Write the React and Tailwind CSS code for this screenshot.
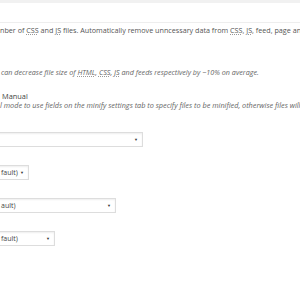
import React from 'react';

function Abbr({ children }) {
  return <abbr title={children} className="underline decoration-dotted decoration-[#999] underline-offset-1">{children}</abbr>;
}

function FakeSelect({ label, right, offset }) {
  // select box that starts off the left edge, like the clipped screenshot
  return (
    <div
      className={`flex items-center justify-between h-[15px] border border-[#ddd] bg-white shadow-[inset_0_1px_2px_rgba(0,0,0,0.07)] pl-[4px] pr-[4px] ${offset} ${right}`}
    >
      <span className="text-[7px] leading-none text-[#444] whitespace-nowrap">{label}</span>
      <span className="text-[4px] leading-none text-[#333]">▼</span>
    </div>
  );
}

export default function App() {
  return (
    <div className="w-[300px] h-[300px] overflow-hidden bg-white text-[#555] font-['Open_Sans',sans-serif]">
      <div className="h-[3px] bg-[#f1f1f1]" />
      <div className="h-[19px]" />
      <div className="border-t border-[#eee]" />

      <p className="mt-[2px] text-[7.2px] leading-[10px] whitespace-nowrap">
        nber of <Abbr>CSS</Abbr> and <Abbr>JS</Abbr> files. Automatically remove unncessary data from <Abbr>CSS</Abbr>, <Abbr>JS</Abbr>, feed, page and
      </p>

      <p className="mt-[32px] pl-[1px] text-[7.2px] leading-[10px] italic text-[#666] whitespace-nowrap">
        can decrease file size of <Abbr>HTML</Abbr>, <Abbr>CSS</Abbr>, <Abbr>JS</Abbr> and feeds respectively by ~10% on average.
      </p>

      <p className="mt-[15px] pl-[2px] text-[7.4px] leading-[9px] text-[#444]">Manual</p>
      <p className="text-[7.3px] leading-[9px] italic text-[#666] whitespace-nowrap">
        l mode to use fields on the minify settings tab to specify files to be minified, otherwise files will
      </p>

      <div className="mt-[22px] flex flex-col gap-[18px]">
        <FakeSelect label="" offset="ml-[-20px]" right="w-[163px]" />
        <FakeSelect label="fault)" offset="ml-[-40px]" right="w-[69px] pl-[40px]" />
        <FakeSelect label="ault)" offset="ml-[-40px]" right="w-[156px] pl-[40px]" />
        <FakeSelect label="fault)" offset="ml-[-40px]" right="w-[95px] pl-[40px]" />
      </div>
    </div>
  );
}
